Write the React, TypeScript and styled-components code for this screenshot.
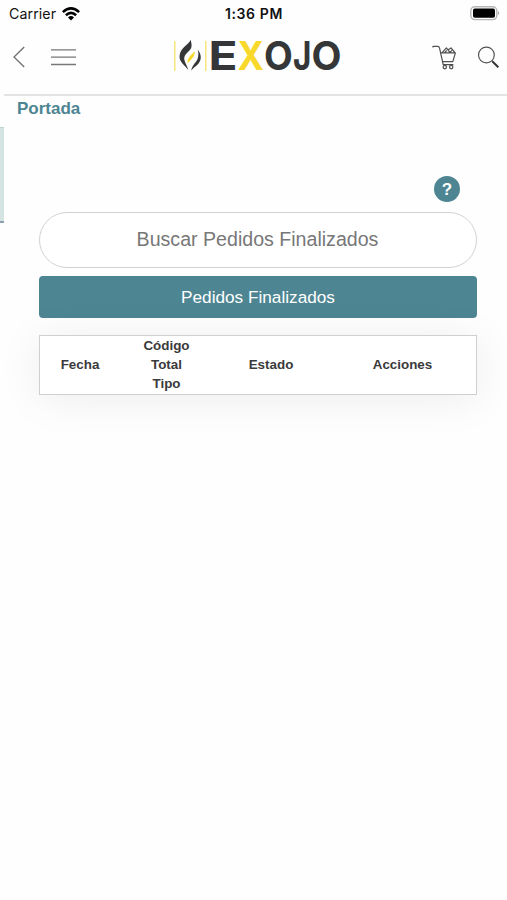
import React from 'react';
import styled, { createGlobalStyle } from 'styled-components';

const teal = '#4d8592';

const GlobalStyle = createGlobalStyle`
  * { box-sizing: border-box; }
  body { margin: 0; background: #fefefe; font-family: "Liberation Sans", Arial, sans-serif; }
`;

const Screen = styled.div`
  width: 507px;
  height: 900px;
  display: flex;
  flex-direction: column;
  overflow: hidden;
  background: #fefefe;
`;

const StatusBar = styled.div`
  height: 27px;
  display: grid;
  grid-template-columns: 216px auto 1fr;
  align-items: center;
  padding: 0 7px 0 9px;
  font-family: Inter, sans-serif;
  color: #111;
`;

const Carrier = styled.div`
  display: flex;
  align-items: center;
  gap: 6px;
  font-size: 14.2px;
  letter-spacing: 0.08px;
`;

const Clock = styled.time`
  font-size: 14px;
  font-weight: 600;
  letter-spacing: 0.6px;
`;

const Battery = styled.div`
  display: flex;
  justify-content: flex-end;
`;

const NavBar = styled.header`
  height: 69px;
  margin-left: 4px;
  display: flex;
  justify-content: space-between;
  align-items: flex-start;
  padding: 9px 7px 0 8px;
  border-bottom: 2px solid #e3e3e3;
`;

const NavGroup = styled.div<{ $gap: number }>`
  display: flex;
  align-items: center;
  height: 42px;
  gap: ${({ $gap }) => $gap}px;
`;

const IconButton = styled.button`
  display: flex;
  padding: 0;
  border: 0;
  background: none;
`;

const Logo = styled.svg`
  display: block;
  margin: -6px 0 0 9px;
`;

const Wordmark = styled.text`
  font-family: Inter, sans-serif;
  font-weight: 700;
  font-size: 40px;
`;

const Main = styled.main`
  display: grid;
  grid-template-columns: 4px 1fr;
  flex: 1;
`;

const SideEdge = styled.aside`
  height: 96px;
  margin-top: 31px;
  border-top: 1px solid #c2d2d0;
  border-bottom: 2px solid #8b9fb1;
  background: #d3e4e1;
`;

const Content = styled.div`
  display: flex;
  flex-direction: column;
  padding: 0 31px 0 35px;
`;

const Breadcrumb = styled.a`
  margin-left: -22px;
  height: 24px;
  line-height: 25px;
  font-size: 17px;
  font-weight: 700;
  color: ${teal};
`;

const HelpButton = styled.button`
  align-self: flex-end;
  width: 26px;
  height: 26px;
  margin: 56px 17px 0 0;
  padding: 0;
  border: 0;
  border-radius: 50%;
  background: ${teal};
  color: #fff;
  font: 700 17px/27px "Liberation Sans", Arial, sans-serif;
`;

const SearchField = styled.input`
  width: 438px;
  height: 56px;
  margin-top: 10px;
  border: 1.5px solid #d2d2d2;
  border-radius: 28px;
  padding: 0 29px 1px 28px;
  background: #fff;
  text-align: center;
  font: 19.6px "Liberation Sans", Arial, sans-serif;
  &::placeholder { color: #777; opacity: 1; }
`;

const Submit = styled.button`
  height: 42px;
  margin-top: 8px;
  padding: 1px 0 0;
  border: 0;
  border-radius: 4px;
  background: ${teal};
  color: #fff;
  font: 17.2px "Liberation Sans", Arial, sans-serif;
`;

const Orders = styled.div`
  display: grid;
  grid-template-columns: 80px 93px 116px 1fr;
  align-items: center;
  height: 60px;
  margin-top: 17px;
  padding-bottom: 2px;
  border: 1px solid #d0d0d0;
  background: #fff;
  box-shadow: 0 4px 44px rgba(0, 0, 0, 0.075);
  color: #3a3a3a;
  font-size: 13.4px;
  font-weight: 700;
  line-height: 19px;
  text-align: center;
`;

const HeadCell = styled.div`
  display: flex;
  flex-direction: column;
`;

const columns = [['Fecha'], ['Código', 'Total', 'Tipo'], ['Estado'], ['Acciones']];

const WifiIcon = () => (
  <svg width="18" height="14" viewBox="0 0 18 14" fill="none" stroke="#000" strokeWidth="2.6">
    <path d="M.9 5.1Q9-2.2 17.1 5.1" />
    <path d="M3.9 8.3Q9 3.6 14.1 8.3" />
    <path d="M6 10.4Q9 7.8 12 10.4L9 13.5Z" fill="#000" stroke="none" />
  </svg>
);

const BatteryIcon = () => (
  <svg width="30" height="15" viewBox="0 0 30 15">
    <rect x=".8" y=".8" width="26" height="12.8" rx="4" fill="#fff" stroke="#b5b5b5" strokeWidth="1.4" />
    <rect x="3" y="2.6" width="22" height="9.2" rx="1.8" fill="#000" />
    <path d="M28 5.1q2.5 2 0 4z" fill="#aaa" />
  </svg>
);

const BackIcon = () => (
  <svg width="13" height="22" viewBox="0 0 13 22" fill="none" stroke="#707070" strokeWidth="1.3">
    <path d="M12.2 1 2 11 12.2 21" />
  </svg>
);

const MenuIcon = () => (
  <svg width="25" height="18" viewBox="0 0 25 18" stroke="#777" strokeWidth="1.3">
    <path d="M0 1.9h25M0 9.2h25M0 16.5h25" />
  </svg>
);

const CartIcon = () => (
  <svg width="25" height="26" viewBox="0 0 25 26" fill="none" stroke="#505050" strokeWidth="1.2" strokeLinejoin="round">
    <path d="M1 3.6V2.3h4.7q1.4 0 1.8 1.6L11.2 20.6H21.4" />
    <path d="M8.6 8.9h14.8l-2.6 8.8H10.7M10.2 8.6l4.2-4.7 3.5 4.5M12.8 8.4l2-1.9M16.2 5.8l2.8-1.9 3.8 4.6M18 8.2l2-1.8" />
    <circle cx="12.8" cy="23.1" r="1.7" />
    <circle cx="19.2" cy="23.1" r="1.7" />
  </svg>
);

const SearchIcon = () => (
  <svg width="23" height="23" viewBox="0 0 23 23" fill="none" stroke="#555">
    <circle cx="9.4" cy="9" r="7.9" strokeWidth="1.2" />
    <path d="m14.9 14.8 1 1" strokeWidth="1.2" />
    <path d="m15.5 15.5 5.8 5.7" stroke="#333" strokeWidth="2" />
  </svg>
);

const BrandLogo = () => (
  <Logo width="172" height="56" viewBox="173 30 172 56" role="img">
    <path d="M174.8 41v30M205.8 41v30" stroke="#f7e36c" strokeWidth="1.3" />
    <path d="M190.8 39.8c-2 4.6-11.2 8.6-11.3 16.8-.1 5.4 5 8.6 8.9 13.4-1.4-5-4.7-8.7-4.1-12.5.8-4.4 6.6-6.7 7.2-10.8.4-2.6-.5-4.6-.7-6.9Z" fill="#343638" />
    <path d="M197.8 49.8c4.3 5 3.8 11.2-.4 15-2.4 2-4.4 3.2-6.2 6 .5-4.2 2.7-6.2 5-9.2 2.3-3.4 2.7-7.2 1.6-11.8Z" fill="#343638" />
    <path d="M194.8 51.6c.3 4.7-3.4 8-7.2 11.6-.6-4.3 3-8.2 7.2-11.6Z" fill="#f8d92b" />
    <Wordmark x="208.5" y="70" textLength="29" lengthAdjust="spacingAndGlyphs" fill="#343638">E</Wordmark>
    <Wordmark x="237.5" y="70" textLength="26.4" lengthAdjust="spacingAndGlyphs" fill="#f8d92b">X</Wordmark>
    <Wordmark x="264" y="70" textLength="28.8" lengthAdjust="spacingAndGlyphs" fill="#343638">O</Wordmark>
    <Wordmark x="293" y="70" textLength="18.4" lengthAdjust="spacingAndGlyphs" fill="#343638">J</Wordmark>
    <Wordmark x="311.6" y="70" textLength="30" lengthAdjust="spacingAndGlyphs" fill="#343638">O</Wordmark>
  </Logo>
);

export default function App() {
  return (
    <Screen>
      <GlobalStyle />
      <StatusBar>
        <Carrier>Carrier <WifiIcon /></Carrier>
        <Clock>1:36 PM</Clock>
        <Battery><BatteryIcon /></Battery>
      </StatusBar>
      <NavBar>
        <NavGroup $gap={26}>
          <IconButton><BackIcon /></IconButton>
          <IconButton><MenuIcon /></IconButton>
        </NavGroup>
        <BrandLogo />
        <NavGroup $gap={20}>
          <IconButton><CartIcon /></IconButton>
          <IconButton><SearchIcon /></IconButton>
        </NavGroup>
      </NavBar>
      <Main>
        <SideEdge />
        <Content>
          <Breadcrumb>Portada</Breadcrumb>
          <HelpButton>?</HelpButton>
          <SearchField placeholder="Buscar Pedidos Finalizados" />
          <Submit>Pedidos Finalizados</Submit>
          <Orders>
            {columns.map((lines) => (
              <HeadCell key={lines[0]}>
                {lines.map((line) => <span key={line}>{line}</span>)}
              </HeadCell>
            ))}
          </Orders>
        </Content>
      </Main>
    </Screen>
  );
}
